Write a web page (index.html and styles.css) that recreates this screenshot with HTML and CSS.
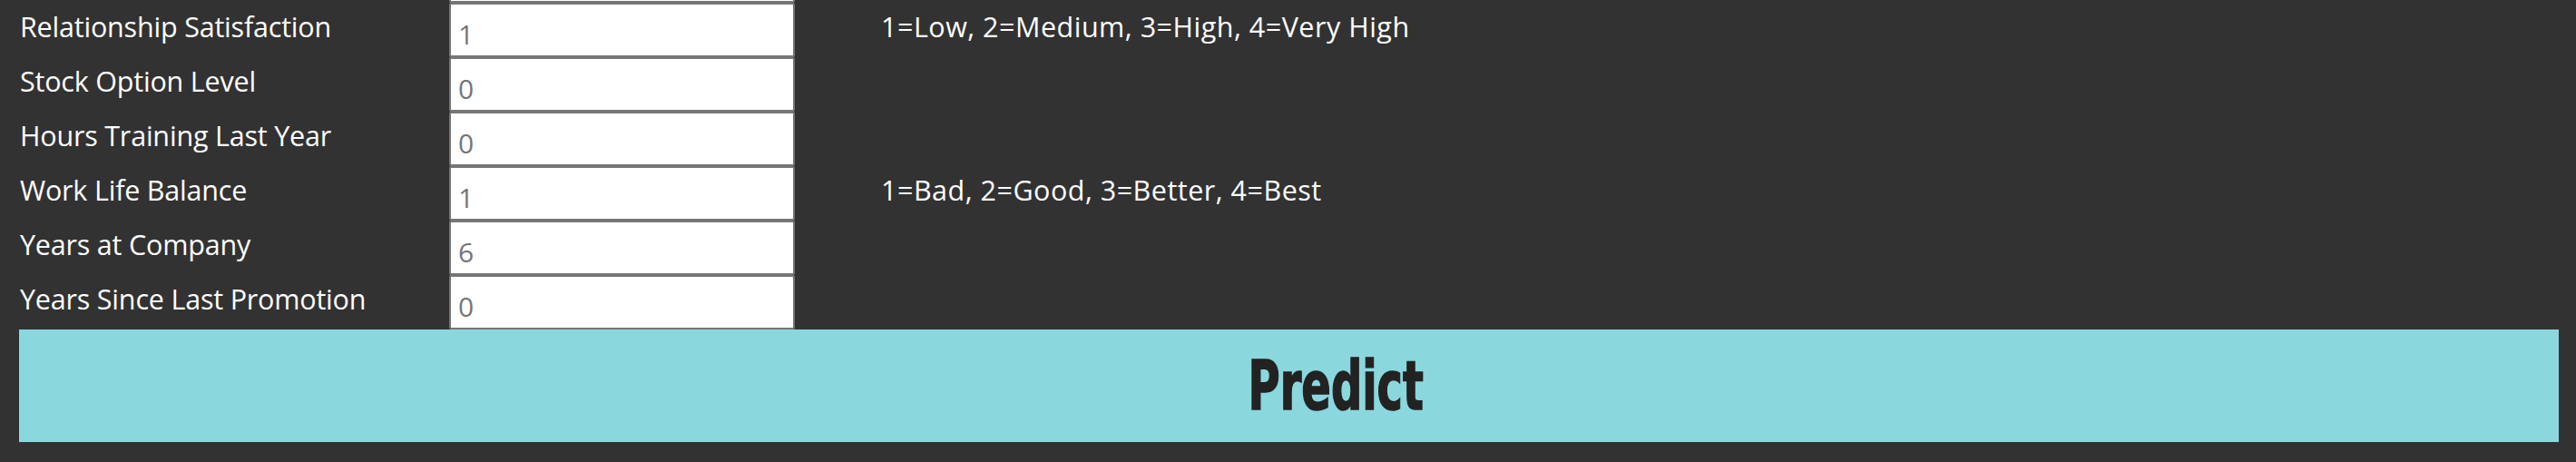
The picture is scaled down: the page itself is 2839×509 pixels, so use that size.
FILE: index.html
```html
<!DOCTYPE html>
<html lang="en">
<head>
<meta charset="utf-8">
<title>Attrition Predictor</title>
<link rel="stylesheet" href="styles.css">
</head>
<body>
<form class="form">
  <div class="rows">
    <div class="row row-prev">
      <span class="label"></span>
      <input class="field" type="text" aria-label="Performance Rating">
    </div>
    <div class="row">
      <label class="label" for="rs">Relationship Satisfaction</label>
      <input class="field" id="rs" type="text" placeholder="1">
      <span class="hint">1=Low, 2=Medium, 3=High, 4=Very High</span>
    </div>
    <div class="row">
      <label class="label" for="so">Stock Option Level</label>
      <input class="field" id="so" type="text" placeholder="0">
      <span class="hint"></span>
    </div>
    <div class="row">
      <label class="label" for="ht">Hours Training Last Year</label>
      <input class="field" id="ht" type="text" placeholder="0">
      <span class="hint"></span>
    </div>
    <div class="row">
      <label class="label" for="wl">Work Life Balance</label>
      <input class="field" id="wl" type="text" placeholder="1">
      <span class="hint">1=Bad, 2=Good, 3=Better, 4=Best</span>
    </div>
    <div class="row">
      <label class="label" for="yc">Years at Company</label>
      <input class="field" id="yc" type="text" placeholder="6">
      <span class="hint"></span>
    </div>
    <div class="row">
      <label class="label" for="yp">Years Since Last Promotion</label>
      <input class="field" id="yp" type="text" placeholder="0">
      <span class="hint"></span>
    </div>
  </div>
  <button class="predict" type="button"><span class="predict-text">Predict</span></button>
</form>
</body>
</html>
```
FILE: styles.css
```css
html, body {
  margin: 0;
  padding: 0;
  background: #323232;
  overflow: hidden;
}

body {
  font-family: "Open Sans", "Noto Sans", sans-serif;
  color: #ffffff;
}

.form {
  margin-top: -57px;
  padding: 0 19px 21px 21px;
  display: flex;
  flex-direction: column;
}

.rows {
  display: flex;
  flex-direction: column;
}

.row {
  display: grid;
  grid-template-columns: 474px 381px 1fr;
  height: 60px;
  align-items: start;
}

.label,
.hint {
  font-size: 30.5px;
  line-height: 38px;
  padding-top: 7px;
  white-space: nowrap;
}

.label {
  padding-left: 1px;
  letter-spacing: -0.2px;
}

.hint {
  grid-column: 3;
  padding-left: 95px;
  letter-spacing: 0.5px;
}

.field {
  box-sizing: border-box;
  width: 381px;
  height: 60px;
  margin: 0;
  border: 2px solid #767676;
  border-radius: 2px;
  background: #ffffff;
  padding: 9px 0 0 8px;
  font-family: "Open Sans", "Noto Sans", sans-serif;
  font-size: 30px;
  color: #222;
  outline: none;
}

.field::placeholder {
  color: #757575;
  opacity: 1;
}

.predict {
  display: flex;
  align-items: center;
  justify-content: center;
  width: 100%;
  height: 124px;
  margin: 0;
  border: none;
  border-radius: 0;
  background: #8ad7de;
  padding: 0 0 0 104px;
  cursor: pointer;
}

.predict-text {
  display: inline-block;
  font-family: "Liberation Sans Narrow", "DejaVu Sans Condensed", "Liberation Sans", sans-serif;
  font-weight: 700;
  font-size: 74px;
  line-height: 1;
  color: #222222;
  -webkit-text-stroke: 1.5px #222222;
  transform: scaleX(0.72);
}
```
